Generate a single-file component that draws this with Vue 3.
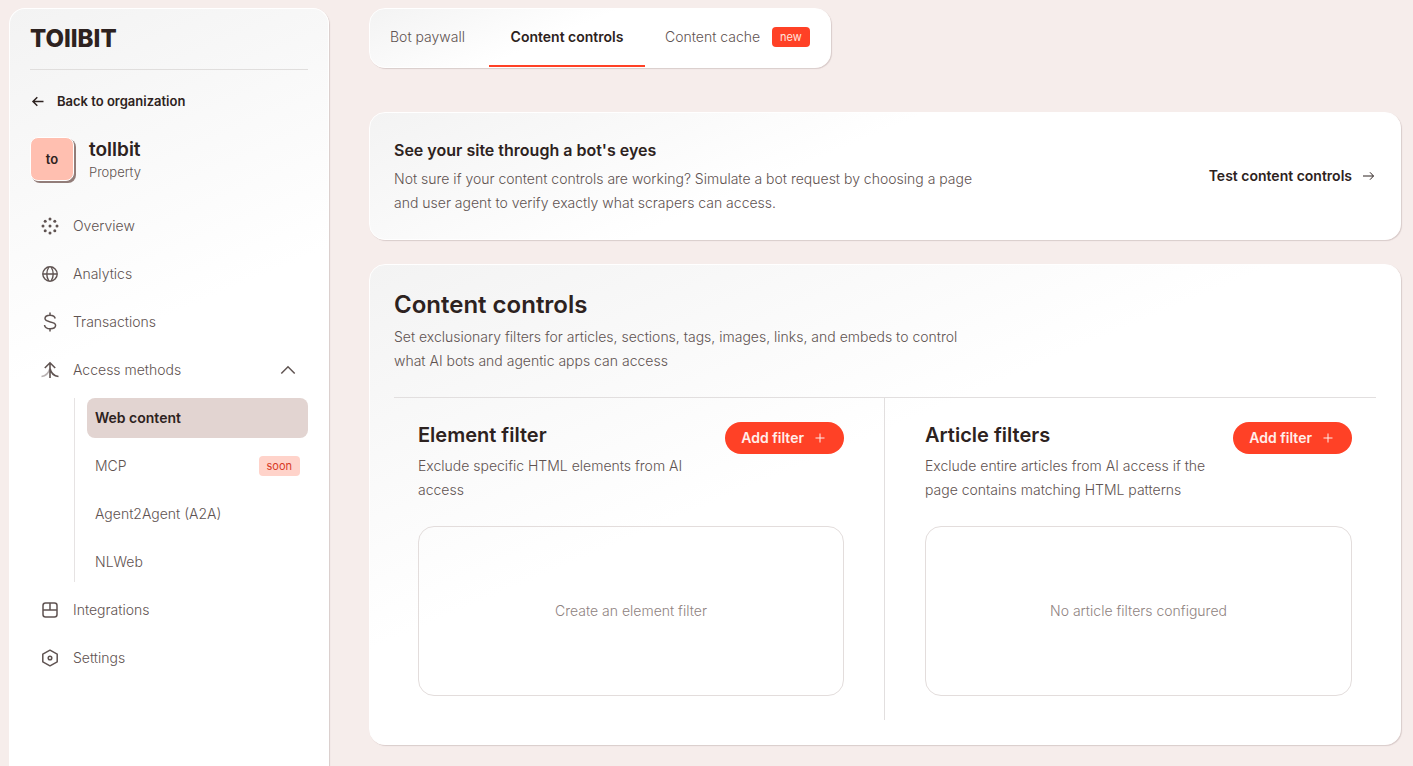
<script setup>
import { ref } from 'vue'

const accessOpen = ref(true)

const tabs = [
  { label: 'Bot paywall' },
  { label: 'Content controls', active: true },
  { label: 'Content cache', badge: 'new' }
]

const methods = [
  { label: 'Web content', active: true },
  { label: 'MCP', badge: 'soon' },
  { label: 'Agent2Agent (A2A)' },
  { label: 'NLWeb' }
]

const filters = [
  {
    title: 'Element filter',
    text: 'Exclude specific HTML elements from AI access',
    empty: 'Create an element filter'
  },
  {
    title: 'Article filters',
    text: 'Exclude entire articles from AI access if the page contains matching HTML patterns',
    empty: 'No article filters configured'
  }
]
</script>

<template>
  <div class="page">
    <aside class="sidebar panel">
      <a class="logo" href="#">TOllBIT</a>

      <a class="back" href="#">
        <svg width="16" height="16" viewBox="0 0 16 16" fill="none" stroke="currentColor" stroke-width="1.5">
          <path d="M13.5 8.5H3M7.3 4.3L3 8.5l4.3 4.2" />
        </svg>
        Back to organization
      </a>

      <div class="property">
        <span class="avatar">to</span>
        <div>
          <p class="property-name">tollbit</p>
          <p class="property-type">Property</p>
        </div>
      </div>

      <nav class="nav">
        <a class="nav-item" href="#">
          <svg class="icon" viewBox="0 0 18 18" fill="currentColor">
            <circle cx="9" cy="2" r="1.5" />
            <circle cx="13.8" cy="4.2" r="1.5" />
            <circle cx="16" cy="9" r="1.5" />
            <circle cx="13.8" cy="13.8" r="1.5" />
            <circle cx="9" cy="16" r="1.5" />
            <circle cx="4.2" cy="13.8" r="1.5" />
            <circle cx="2" cy="9" r="1.5" />
            <circle cx="4.2" cy="4.2" r="1.5" />
            <circle cx="9" cy="9" r="1.5" />
          </svg>
          Overview
        </a>
        <a class="nav-item" href="#">
          <svg class="icon" viewBox="0 0 18 18" fill="none" stroke="currentColor" stroke-width="1.4">
            <circle cx="9" cy="9" r="7.2" />
            <path d="M1.8 9h14.4M7.8 2C5.2 6.5 5.2 11.5 7.8 16M10.2 2c2.6 4.5 2.6 9.5 0 14" />
          </svg>
          Analytics
        </a>
        <a class="nav-item" href="#">
          <svg class="icon tall" viewBox="0 0 18 20" fill="none" stroke="currentColor" stroke-width="1.5">
            <path d="M9 .5v3M9 16.5v3M14.2 6.5C13.8 4.5 12 3.3 9 3.3c-3 0-5 1.3-5 3.3 0 4.6 10.6 2 10.6 6.7 0 2.2-2.3 3.5-5.4 3.5-3.2 0-5.4-1.4-5.7-3.8" />
          </svg>
          Transactions
        </a>
        <button class="nav-item" type="button" :aria-expanded="accessOpen" @click="accessOpen = !accessOpen">
          <svg class="icon" viewBox="0 0 18 18" fill="none" stroke="currentColor" stroke-width="1.6">
            <path d="M.5 15.5c4-.5 7-3 8.5-8" opacity=".45" />
            <path d="M9 17V2M3.8 7L9 1.8 14.2 7M9 7.5c1 4.5 4 7.5 8.5 8" />
          </svg>
          Access methods
          <svg class="chevron" :class="{ closed: !accessOpen }" viewBox="0 0 16 16" fill="none" stroke="currentColor" stroke-width="1.5">
            <path d="M1.3 11.5L8 4.8l6.7 6.7" />
          </svg>
        </button>
        <div v-if="accessOpen" class="subnav">
          <a v-for="item in methods" :key="item.label" class="subnav-item" :class="{ active: item.active }" href="#">
            {{ item.label }}
            <span v-if="item.badge" class="badge soft">{{ item.badge }}</span>
          </a>
        </div>
        <a class="nav-item" href="#">
          <svg class="icon" viewBox="0 0 18 18" fill="none" stroke="currentColor" stroke-width="1.5">
            <rect x="2" y="2" width="14" height="14" rx="2.5" />
            <path d="M2 9h14M9 2v7" />
          </svg>
          Integrations
        </a>
        <a class="nav-item" href="#">
          <svg class="icon" viewBox="0 0 18 18" fill="none" stroke="currentColor" stroke-width="1.5" stroke-linejoin="round">
            <path d="M9 1.2l7.2 4v7.6L9 16.8l-7.2-4V5.2z" />
            <circle cx="9" cy="9" r="1.8" />
          </svg>
          Settings
        </a>
      </nav>
    </aside>

    <main class="main">
      <nav class="tabs panel">
        <a v-for="tab in tabs" :key="tab.label" class="tab" :class="{ active: tab.active }" href="#">
          {{ tab.label }}
          <span v-if="tab.badge" class="badge">{{ tab.badge }}</span>
        </a>
      </nav>

      <section class="simulate panel">
        <div class="copy">
          <h2>See your site through a bot's eyes</h2>
          <p>
            Not sure if your content controls are working? Simulate a bot request by choosing a page
            and user agent to verify exactly what scrapers can access.
          </p>
        </div>
        <a class="test-link" href="#">
          Test content controls
          <svg width="14" height="12" viewBox="0 0 14 12" fill="none" stroke="currentColor" stroke-width="1">
            <path d="M1 6h10.5M8 2.3L11.5 6 8 9.7" />
          </svg>
        </a>
      </section>

      <section class="controls panel">
        <div class="copy">
          <h1>Content controls</h1>
          <p>
            Set exclusionary filters for articles, sections, tags, images, links, and embeds to control
            what AI bots and agentic apps can access
          </p>
        </div>
        <div class="filters">
          <div v-for="filter in filters" :key="filter.title" class="filter">
            <div class="filter-header">
              <div class="filter-copy">
                <h3>{{ filter.title }}</h3>
                <p>{{ filter.text }}</p>
              </div>
              <button class="add-button" type="button">
                Add filter
                <svg width="16" height="16" viewBox="0 0 16 16" fill="none" stroke="currentColor">
                  <path d="M8 3.5v9M3.5 8h9" />
                </svg>
              </button>
            </div>
            <div class="empty">{{ filter.empty }}</div>
          </div>
        </div>
      </section>
    </main>
  </div>
</template>

<style>
body {
  background: #f6edeb;
}
</style>

<style scoped>
.page {
  display: flex;
  gap: 40px;
  box-sizing: border-box;
  min-height: 100vh;
  padding: 8px 12px 0 9px;
  font-family: Inter, 'Liberation Sans', sans-serif;
  font-size: 14px;
  font-weight: 300;
  line-height: 24px;
  color: #5f5351;
}

.page * {
  box-sizing: border-box;
}

a {
  text-decoration: none;
  color: inherit;
}

button {
  font: inherit;
  color: inherit;
  border: 0;
  background: none;
  cursor: pointer;
}

h1,
h2,
h3,
p {
  margin: 0;
}

h1,
h2,
h3 {
  font-weight: 600;
  color: #2d2220;
}

.panel {
  border: 1px solid #fff;
  border-radius: 16px;
  background: linear-gradient(157deg, #f3f3f3, #fff 42%);
  box-shadow: 1px 1px 1px #d9cccb;
}

.sidebar {
  flex: 0 0 320px;
  padding: 20px 20px 0;
  border-bottom: 0;
  border-radius: 16px 16px 0 0;
}

.logo {
  display: block;
  padding-bottom: 20px;
  border-bottom: 1px solid #e0dedd;
  font-size: 24px;
  font-weight: 800;
  line-height: 20px;
  color: #2d2220;
}

.back {
  display: flex;
  align-items: center;
  gap: 11px;
  margin-top: 21px;
  font-size: 13px;
  font-weight: 600;
  line-height: 20px;
  color: #2d2220;
}

.property {
  display: flex;
  align-items: center;
  gap: 15px;
  margin-top: 25px;
}

.avatar {
  display: flex;
  align-items: center;
  justify-content: center;
  width: 44px;
  height: 44px;
  border: 1px solid #fff;
  border-radius: 8px;
  background: #ffbfb0;
  box-shadow: 2px 2px 0 #927d79;
  font-size: 13px;
  font-weight: 600;
  color: #2d2220;
}

.property-name {
  padding-top: 2px;
  font-size: 19px;
  font-weight: 600;
  color: #2d2220;
}

.property-type {
  font-size: 13px;
  line-height: 20px;
}

.nav {
  display: flex;
  flex-direction: column;
  gap: 8px;
  margin-top: 24px;
}

.nav-item {
  display: flex;
  align-items: center;
  gap: 14px;
  height: 40px;
  padding: 0 12px 0 11px;
}

.icon {
  width: 18px;
  height: 18px;
}

.icon.tall {
  height: 20px;
}

.chevron {
  width: 16px;
  height: 16px;
  margin-left: auto;
}

.chevron.closed {
  transform: rotate(180deg);
}

.subnav {
  display: flex;
  flex-direction: column;
  gap: 8px;
  margin-left: 44px;
  padding-left: 12px;
  border-left: 1px solid #e6e3e3;
}

.subnav-item {
  display: flex;
  align-items: center;
  justify-content: space-between;
  height: 40px;
  padding: 0 8px;
  border-radius: 8px;
}

.subnav-item.active {
  background: #e2d4d1;
  font-weight: 600;
  color: #2d2220;
}

.badge {
  padding: 0 8px;
  border-radius: 4px;
  background: #ff4126;
  font-size: 11px;
  font-weight: 400;
  line-height: 20px;
  color: #ffe4de;
}

.badge.soft {
  background: #ffd3ca;
  color: #d83a26;
}

.main {
  flex: 1;
  min-width: 0;
  padding-bottom: 20px;
}

.tabs {
  display: grid;
  grid-template-columns: 119px 156px auto;
  width: fit-content;
  height: 60px;
}

.tab {
  display: flex;
  align-items: center;
  gap: 12px;
  padding: 0 20px;
  border-bottom: 2px solid transparent;
}

.tab.active {
  justify-content: center;
  border-color: #ff4126;
  font-weight: 600;
  color: #2d2220;
}

.simulate {
  display: flex;
  align-items: center;
  justify-content: space-between;
  margin-top: 44px;
  padding: 24px;
}

.copy {
  max-width: 592px;
}

h2 {
  margin-bottom: 4px;
  font-size: 16px;
  line-height: 26px;
}

.test-link {
  display: flex;
  align-items: center;
  gap: 10px;
  font-weight: 600;
  color: #2d2220;
}

.controls {
  margin-top: 24px;
  padding: 24px;
}

h1 {
  margin-bottom: 4px;
  font-size: 24px;
  line-height: 32px;
}

.filters {
  display: grid;
  grid-template-columns: 1fr 1fr;
  margin-top: 24px;
  border-top: 1px solid #e2dfdf;
}

.filter {
  padding: 24px 24px 24px 40px;
}

.filter:first-child {
  padding: 24px 40px 24px 24px;
  border-right: 1px solid #e2dfdf;
}

.filter-header {
  display: flex;
  align-items: flex-start;
  justify-content: space-between;
}

.filter-copy {
  max-width: 288px;
}

h3 {
  margin-bottom: 6px;
  font-size: 20px;
  line-height: 26px;
}

.add-button {
  display: flex;
  align-items: center;
  gap: 8px;
  height: 32px;
  padding: 0 16px;
  border-radius: 16px;
  background: #ff4126;
  font-weight: 600;
  color: #ffeeea;
}

.empty {
  display: flex;
  align-items: center;
  justify-content: center;
  height: 170px;
  margin-top: 24px;
  border: 1px solid #e3dddc;
  border-radius: 16px;
  color: #8f8381;
}
</style>
